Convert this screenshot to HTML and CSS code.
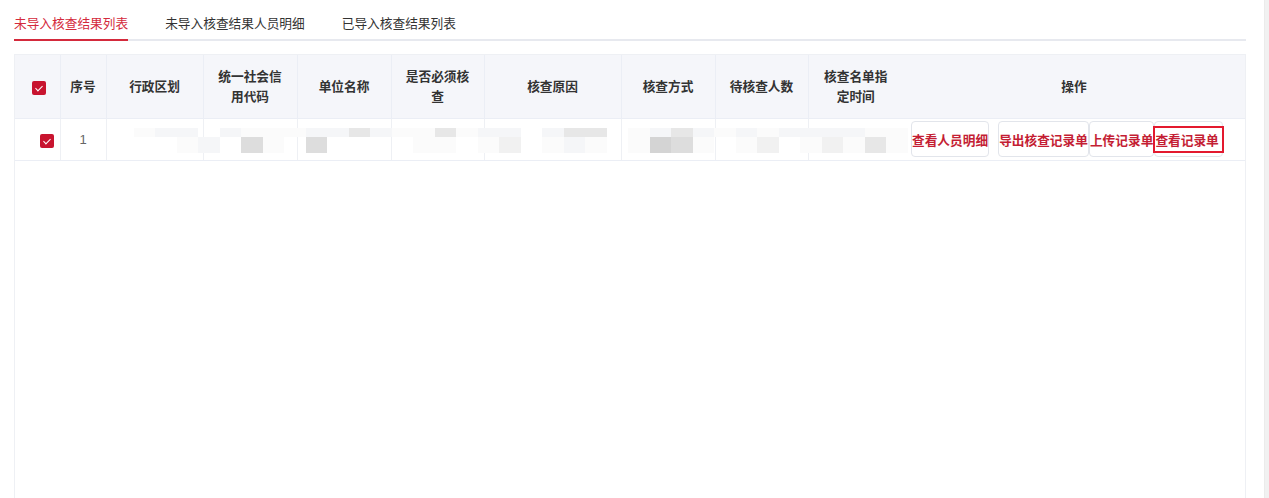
FILE: index.html
```html
<!DOCTYPE html>
<html lang="zh-CN">
<head>
    <meta charset="utf-8">
    <title>核查结果</title>
    <link rel="stylesheet" href="styles.css">
</head>
<body>
    <div class="page">
        <div class="tabs">
            <div class="tab active">未导入核查结果列表</div>
            <div class="tab">未导入核查结果人员明细</div>
            <div class="tab">已导入核查结果列表</div>
        </div>
        <div class="table-wrap">
            <table class="grid">
                <colgroup>
                    <col class="w-check">
                    <col class="w-index">
                    <col class="w-97">
                    <col class="w-94">
                    <col class="w-94">
                    <col class="w-93">
                    <col class="w-137">
                    <col class="w-94">
                    <col class="w-93">
                    <col class="w-95">
                    <col>
                </colgroup>
                <thead>
                    <tr>
                        <th class="col-check"><span class="checkbox"></span></th>
                        <th class="col-index">序号</th>
                        <th>行政区划</th>
                        <th>统一社会信用代码</th>
                        <th>单位名称</th>
                        <th>是否必须核查</th>
                        <th>核查原因</th>
                        <th>核查方式</th>
                        <th>待核查人数</th>
                        <th>核查名单指定时间</th>
                        <th class="no-left">操作</th>
                    </tr>
                </thead>
                <tbody>
                    <tr>
                        <td class="row-check"><span class="checkbox"></span></td>
                        <td class="num">1</td>
                        <td class="masked"><div class="mosaic" id="mosaic"></div></td>
                        <td></td>
                        <td></td>
                        <td></td>
                        <td></td>
                        <td></td>
                        <td></td>
                        <td></td>
                        <td class="ops no-left">
                            <button class="btn">查看人员明细</button><button class="btn gap">导出核查记录单</button><button class="btn">上传记录单</button><button class="btn focused"><span>查看记录单</span></button>
                        </td>
                    </tr>
                </tbody>
            </table>
        </div>
    </div>
    <div class="scroll-track"></div>
    <script>
        // masked values: two rows of shaded blocks
        var top_row = "122021112242114122024401242121222211";
        var bottom_row = "001205105000011013012101651013013141";
        function buildMosaic() {
            var box = document.getElementById("mosaic");
            var rows = [top_row, bottom_row];
            for (var r = 0; r < rows.length; r++) {
                for (var i = 0; i < rows[r].length; i++) {
                    var cell = document.createElement("span");
                    cell.className = "s" + rows[r].charAt(i);
                    box.appendChild(cell);
                }
            }
        }
        buildMosaic();
    </script>
</body>
</html>
```

FILE: styles.css
```css
body {
    margin: 0;
    display: flex;
    min-height: 100vh;
    background: #fff;
    font-family: "Noto Sans CJK SC", "Noto Sans", sans-serif;
    color: #303133;
    overflow: hidden;
}
.page {
    flex: 1;
    padding: 0 18px 0 14px;
}
.scroll-track {
    width: 4px;
    background: #f1f1f1;
    border-left: 1px solid #ebebeb;
}

/* tabs */
.tabs {
    display: flex;
    gap: 37px;
    height: 41px;
    padding-top: 6px;
    box-sizing: border-box;
    border-bottom: 2px solid #e7e9ef;
    margin-bottom: 13px;
}
.tab {
    font-size: 12.7px;
    line-height: 33px;
    height: 33px;
    color: #333;
}
.tab.active {
    color: #d42a3c;
    border-bottom: 2px solid #d42a3c;
}

/* table */
.table-wrap {
    border: 1px solid #eef0f4;
    border-bottom: none;
    height: 460px;
}
.grid {
    width: 100%;
    border-collapse: collapse;
    table-layout: fixed;
    font-size: 12.7px;
}
.w-check { width: 45px; }
.w-index { width: 46px; }
.w-97 { width: 97px; }
.w-94 { width: 94px; }
.w-93 { width: 93px; }
.w-95 { width: 95px; }
.w-137 { width: 137px; }
th {
    height: 63px;
    box-sizing: border-box;
    padding: 0 10px;
    background: #f5f6fa;
    font-weight: 600;
    line-height: 20px;
    color: #333;
    text-align: center;
    border-left: 1px solid #ebeef5;
    border-bottom: 1px solid #ebeef5;
}
th:first-child, td:first-child {
    border-left: none;
}
td {
    height: 42px;
    box-sizing: border-box;
    padding: 0 8px;
    text-align: center;
    color: #606266;
    border-left: 1px solid #eef0f4;
    border-bottom: 1px solid #ebeef5;
}
.no-left {
    border-left: none;
}
.col-check {
    padding: 0 0 0 3px;
}
.col-index {
    padding: 0;
}
.row-check {
    text-align: right;
    padding: 0 6px 0 0;
}
.num {
    font-family: "Liberation Sans", Arial, sans-serif;
    font-size: 13px;
    color: #666;
}

.checkbox {
    display: inline-block;
    width: 14px;
    height: 14px;
    background: #c8142f;
    border-radius: 2px;
    position: relative;
    vertical-align: middle;
}
.checkbox::after {
    content: "";
    position: absolute;
    left: 5px;
    top: 3px;
    width: 3px;
    height: 6px;
    border: solid #fff;
    border-width: 0 1px 1px 0;
    transform: rotate(45deg);
}

/* masked cell values */
.masked {
    position: relative;
}
.mosaic {
    position: absolute;
    left: 27px;
    top: 9px;
    display: grid;
    grid-template-columns: repeat(36, 21.5px);
    grid-template-rows: 9px 16px;
    z-index: 1;
}
.s0 { background: transparent; }
.s1 { background: #fbfbfb; }
.s2 { background: #f5f6f8; }
.s3 { background: #f1f1f1; }
.s4 { background: #e7e7e7; }
.s5 { background: #dddddd; }
.s6 { background: #d4d4d4; }

/* row actions */
.ops {
    text-align: left;
    padding: 0 0 0 8px;
    white-space: nowrap;
}
.btn {
    height: 36px;
    padding: 0;
    background: #fff;
    border: 1px solid #e2e5eb;
    border-radius: 4px;
    color: #c41e34;
    font-family: "Noto Sans CJK SC", sans-serif;
    font-size: 12.7px;
    font-weight: 600;
    vertical-align: middle;
    cursor: pointer;
}
.btn.gap {
    margin-left: 9px;
}
.btn.focused span {
    display: inline-block;
    padding: 2px 3px 1px 0;
    outline: 2px solid #e3192e;
    line-height: 20px;
}
```
